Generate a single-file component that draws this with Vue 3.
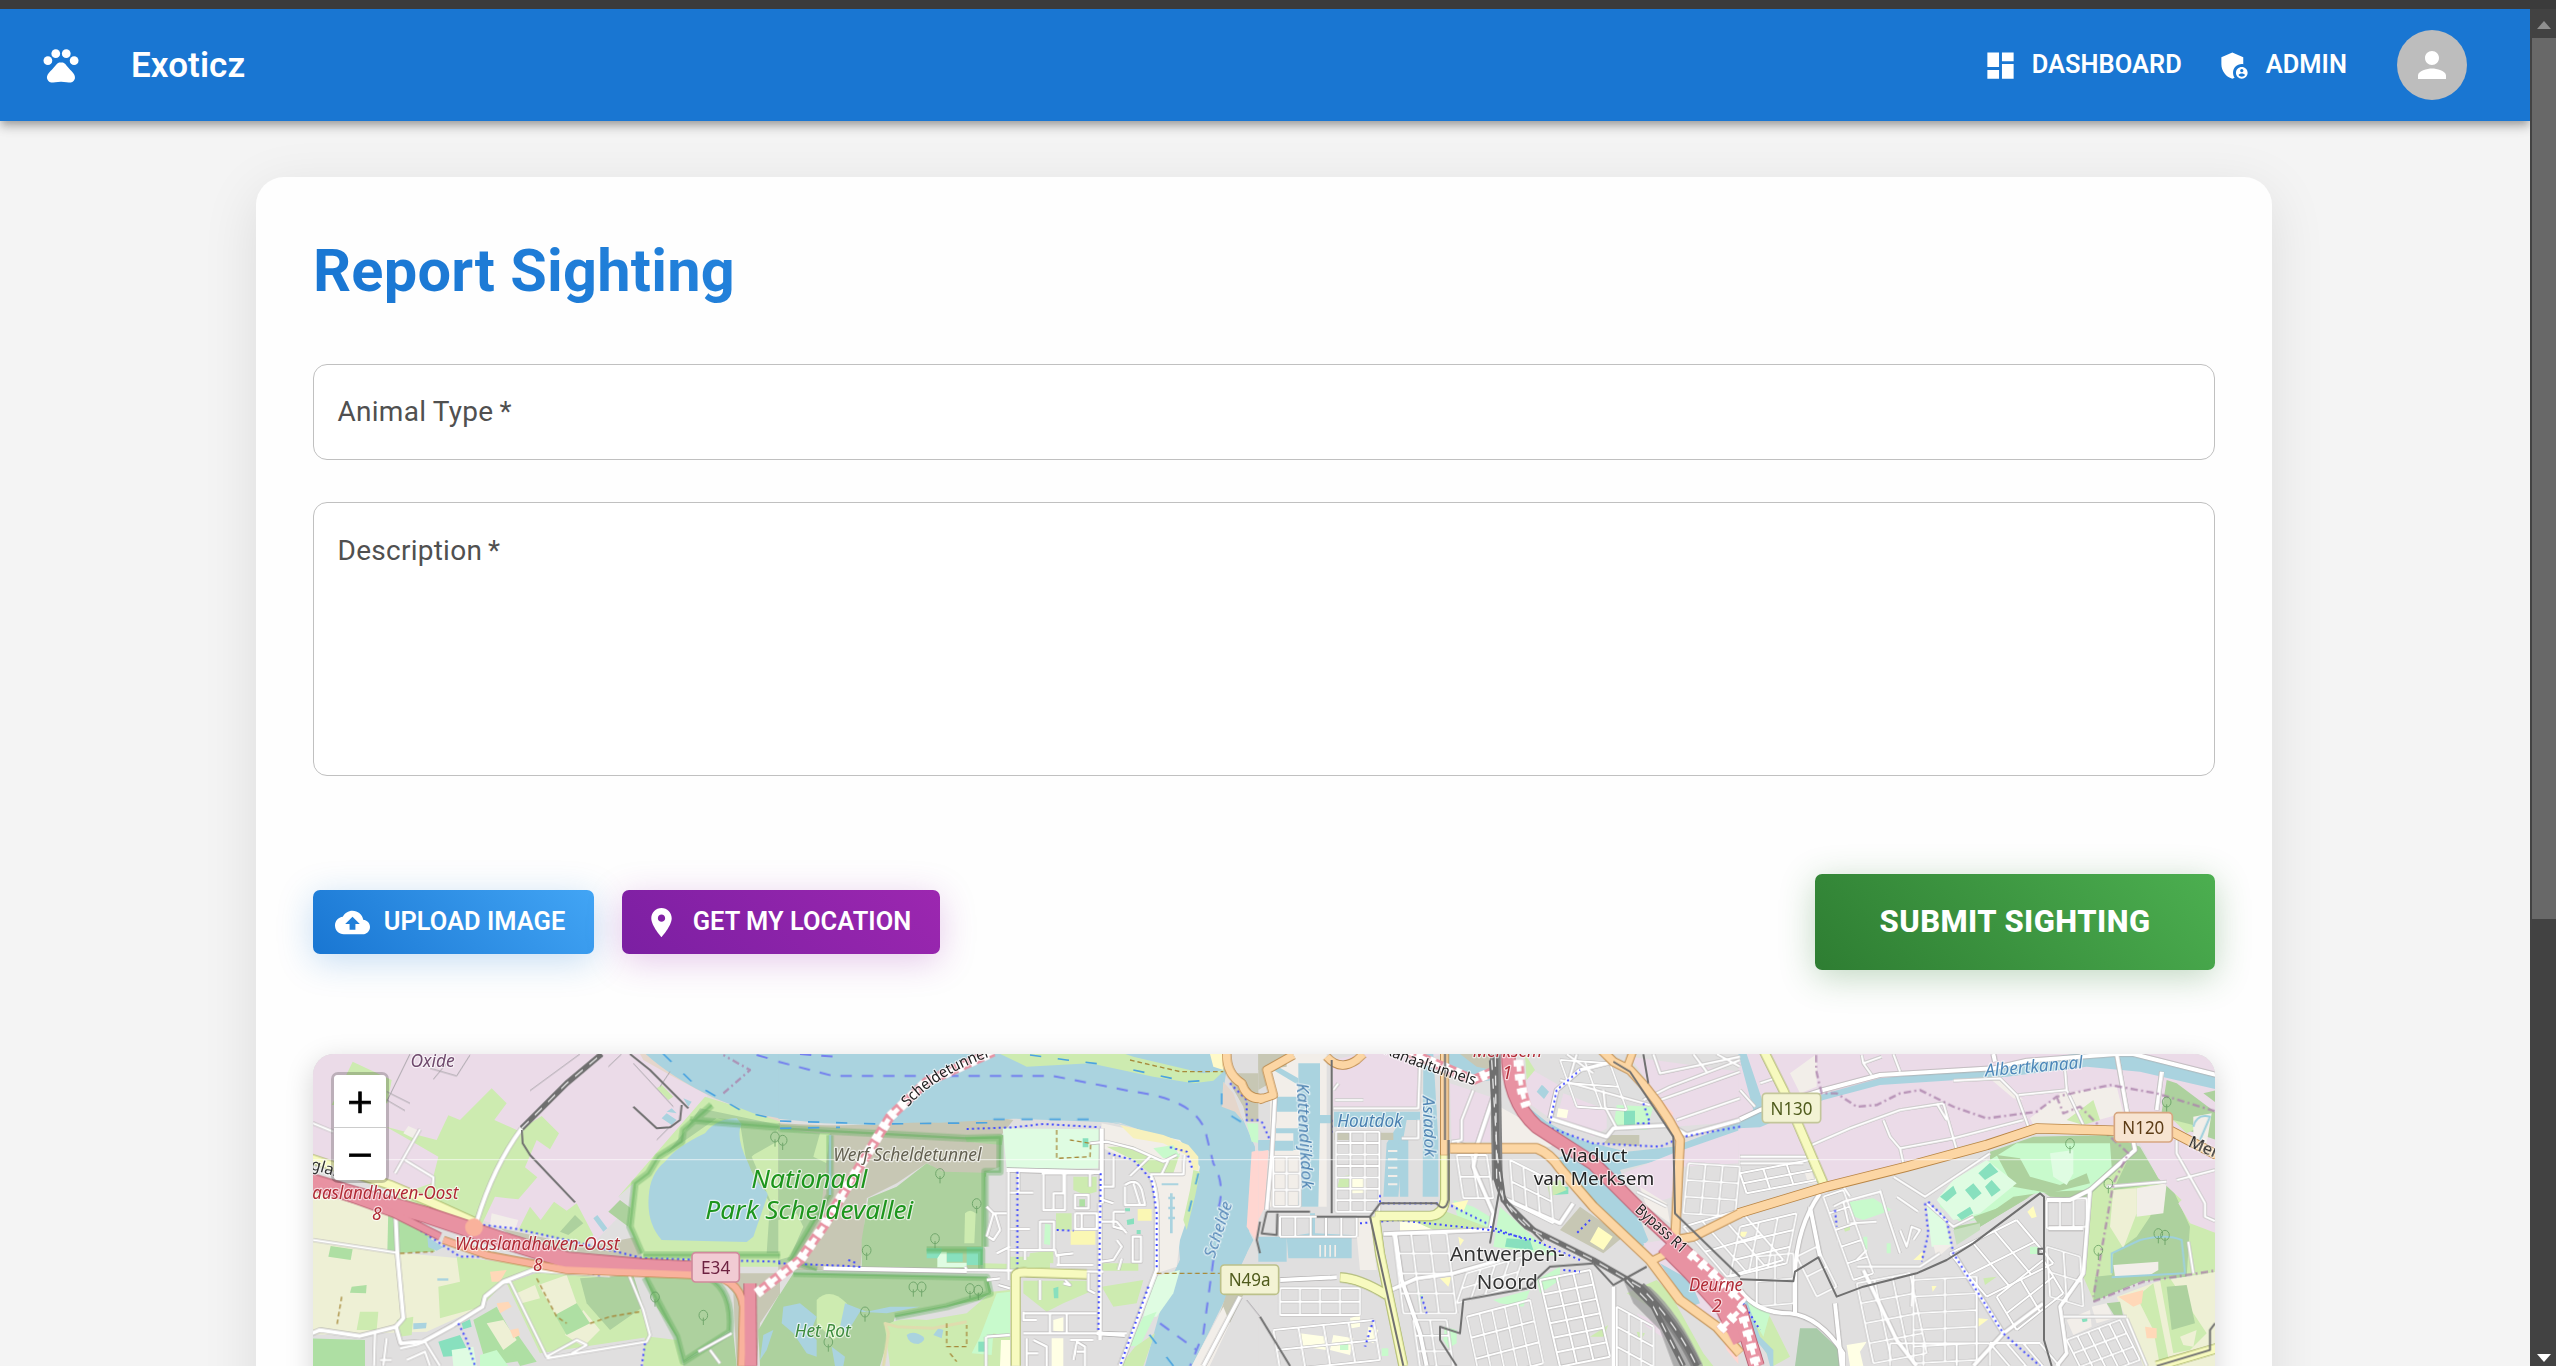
<script setup>
const icons = {
  dashboard: 'M3 13h8V3H3v10zm0 8h8v-6H3v6zm10 0h8V11h-8v10zm0-18v6h8V3h-8z',
  person: 'M12 12c2.21 0 4-1.79 4-4s-1.79-4-4-4-4 1.79-4 4 1.79 4 4 4zm0 2c-2.67 0-8 1.34-8 4v2h16v-2c0-2.66-5.33-4-8-4z',
  upload: 'M19.35 10.04C18.67 6.59 15.64 4 12 4 9.11 4 6.6 5.64 5.35 8.04 2.34 8.36 0 10.91 0 14c0 3.31 2.69 6 6 6h13c2.76 0 5-2.24 5-5 0-2.64-2.05-4.78-4.65-4.96zM14 13v4h-4v-4H7l5-5 5 5h-3z',
  pin: 'M12 2C8.13 2 5 5.13 5 9c0 5.25 7 13 7 13s7-7.75 7-13c0-3.87-3.13-7-7-7zm0 9.5c-1.38 0-2.5-1.12-2.5-2.5s1.12-2.5 2.5-2.5 2.5 1.12 2.5 2.5-1.12 2.5-2.5 2.5z'
}

// Map palette
const IND = '#ebdbe8', GRASS = '#cdebb0', WOOD = '#add19e', WATER = '#aad3df', PARK = '#c8facc'
const FARM = '#eef0d5', BROWN = '#c7c7b4', PITCH = '#88e0be', REC = '#dffce2', SCHOOL = '#ffffe5'
const RES = '#e0dfdf', SAND = '#f2eee9', ALLOT = '#aedfa3', PEACH = '#ffd8b8', BEACH = '#e5d6cb', RETAIL = '#ffd6d1'

// Street mesh over a parallelogram: origin, two edge vectors, divisions along each
function mesh(x, y, ux, uy, vx, vy, n, m) {
  let d = ''
  for (let i = 0; i <= n; i++) {
    const t = i / n
    d += `M${x + ux * t} ${y + uy * t}l${vx} ${vy}`
  }
  for (let j = 0; j <= m; j++) {
    const t = j / m
    d += `M${x + vx * t} ${y + vy * t}l${ux} ${uy}`
  }
  return d
}

// Each tile is 1440 units wide; coordinates below are local to the tile
const tiles = [
  {
    x: 0,
    areas: [
      [IND, 'M0 30H1260L1215 190L955 470L985 500L880 610L560 545L0 350Z'],
      [GRASS, 'M158 65L275 120L262 190L95 195Z'],
      [GRASS, 'M258 260L410 300L445 226L480 240L575 145L620 190L583 240L655 272L725 228L777 280L750 328L710 300L675 382L712 412L655 478L585 470L540 565L250 480L395 430L415 350L345 310Z'],
      [GRASS, 'M655 570L690 500L722 540L762 485L800 512L830 490L880 585L860 615Z'],
      [IND, 'M590 473L672 500L650 562L575 545Z'], [SAND, 'M575 520L655 540L645 570L570 555Z'],
      [SAND, 'M325 258L352 270L340 295L310 280Z'],
      [BROWN, 'M600 565L860 620L1010 590L1030 660L700 630Z'],
      [WOOD, 'M960 480L1000 510L985 560L925 515Z'], [WOOD, 'M780 575L825 525L850 550L805 585Z'],
      [FARM, 'M0 410L270 500L262 635L480 655L560 690L545 800L380 875L0 885Z'],
      [ALLOT, 'M265 505L390 590L405 635L262 640Z'], [ALLOT, 'M92 618L158 628L152 660L85 650Z'],
      [GRASS, 'M470 650L720 680L600 740L545 800L420 835L415 740L480 725Z'],
      [WATER, 'M382 590L430 622L410 632L385 622Z'],
      [ALLOT, 'M155 740L200 735L198 760L150 758Z'], [GRASS, 'M180 815L235 815L230 870L170 870Z'],
      [ALLOT, 'M35 895L195 900V978H35Z'],
      [GRASS, 'M290 840L340 830L335 885L300 890Z'],
      [GRASS, 'M620 730L720 695L990 700L1050 890L720 940Z'],
      [FARM, 'M715 735L800 705L830 790L770 830Z'], [FARM, 'M850 810L900 870L850 920L795 885Z'],
      [FARM, 'M650 760L705 735L720 775L665 790Z'],
      [WOOD, 'M840 715L1000 705L1030 800L930 870L860 790Z'],
      [ALLOT, 'M765 825L830 790L870 850L800 885Z'],
      [ALLOT, 'M520 840L590 800L680 960L560 978Z'], [ALLOT, 'M650 880L710 965L660 978L625 910Z'],
      [FARM, 'M560 850L610 840L650 900L610 930Z'], [PEACH, 'M570 695L620 690L600 725L575 725Z'],
      [PEACH, 'M590 790L625 785L635 800L600 820Z'], [PEACH, 'M630 870L655 865L660 885L640 895Z'],
      [PITCH, 'M415 905L480 885L510 945L430 950Z'], [PITCH, 'M485 850L510 838L515 860L490 868Z'],
      [REC, 'M455 930L520 920L530 978H460Z'], [PARK, 'M540 945L590 930L625 978H540Z'],
      [WATER, 'M340 850L380 848L378 865L340 868Z'], [WATER, 'M412 715H445V722H412Z'],
      [WATER, 'M1085 235l15-15 30 20-15 15zM1150 175l25 10-10 15zM1100 215l15-10 15 15zM880 535l12-10 30 40-12 10z'],
      [GRASS, 'M1070 145L1085 135L1120 170L1105 180Z'],
      [GRASS, 'M1215 170L1440 240V680H1025L1025 640L985 560L1000 430L955 470Z'],
      [WOOD, 'M1200 205L1440 255V640H1400L1410 490L1340 370L1320 250L1250 235L1100 340L1150 280Z'],
      [BEACH, 'M1020 42L1030 60L1110 105L1240 175L1440 245V200L1060 40Z'],
      [WATER, 'M1035 30H1445V236L1360 220L1245 175Q1110 110 1035 40Z'],
      [WATER, 'M1095 365Q1130 320 1215 280Q1250 235 1310 235L1325 252Q1305 290 1345 370Q1365 430 1405 460L1360 590L1340 606L1085 600Q1040 550 1046 470Q1050 400 1095 365Z'],
      [GRASS, 'M1355 350L1440 260V540L1410 480Z'], [WOOD, 'M1330 255L1440 275V300L1350 350Z'],
      [GRASS, 'M1030 978L1035 880L1050 890L1130 900L1150 978Z'],
      [WOOD, 'M1035 710L1220 710Q1300 750 1290 870L1150 965L1130 890L1070 800Z'],
      [WOOD, 'M1150 965L1300 880L1310 978H1150Z'],
      [BROWN, 'M1250 700H1440V760L1380 850L1370 978H1310L1300 760Z'],
      [WOOD, 'M1375 870L1440 760V978H1380Z'], [WATER, 'M1390 885L1420 870L1400 930L1380 960Z']
    ],
    glow: ['M1235 195L1150 270L1145 305L1075 350L1045 400L1005 430L990 560L1025 640', 'M1170 240L1440 262', 'M1030 645H1440', 'M1035 712L1130 890L1150 965L1290 875Q1300 750 1225 712'],
    s: ['M39 250L100 275M39 600L290 638M600 730L630 725L740 950L830 900L860 915L815 940M740 955L1040 905L1050 885L1030 810L985 700L930 705M250 978L260 895M240 960H275M300 925L350 915L375 905L420 978M225 880L222 978M320 960L375 935L390 978M1195 935L1295 880M1230 930L1260 970M285 400L360 268M315 360L400 412L398 440'],
    m: ['M530 545Q580 380 665 265', 'M283 440L292 640L310 835L288 860L302 910L370 905L460 855L548 800L555 770L610 725L700 690L930 705', 'M0 895L60 870L180 888L290 860'],
    y: ['M0 345L270 435L400 490L520 545'],
    rd: [['M0 415L150 460L380 525L590 595L800 660L1025 680L1180 688H1260', 46, '#e892a2'], ['M0 420L280 520L420 590', 20, '#e892a2'], ['M430 600L560 645L800 690L1180 705Q1320 700 1330 800L1325 978', 20, '#f9b29c'], ['M1350 730L1352 978', 34, '#e892a2']],
    rail: ['M665 265L730 200L800 130L905 42'],
    rail2: ['M665 270L668 310L690 345L825 487', 'M990 42L1050 90L1165 205', 'M1000 200L1070 265L1110 262L1140 240L1145 195'],
    thin: ['M260 185L330 42M260 155L330 190M260 180L315 212M690 152L840 42M400 118L440 70M390 85L470 108L510 45M925 80L965 42M1000 70L1120 200M1070 300L1110 260M1080 140L1110 95'],
    blue: ['M160 480L290 525L390 590L480 650L610 650L800 692L900 705', 'M550 555L640 565L800 600L950 635L1030 655L1440 665', 'M475 850L500 900L525 978', 'M1035 910L1025 978'],
    sea: ['M1090 42L1180 130L1250 170L1330 215L1440 240'],
    ferry: ['M1370 45L1430 62'],
    admin: ['M1270 160L1350 90L1270 45'],
    brown: ['M125 770L110 860', 'M300 640L400 635', 'M710 715L770 830L800 850', 'M870 850L930 830L1020 815']
  },
  {
    x: 1440,
    areas: [
      [BROWN, 'M-5 260L220 255L640 230L700 240L660 290L640 380L480 410L440 360L350 420L260 470L240 690H-5Z'],
      [WATER, 'M-5 30H1330L1300 120L1240 128L1100 95L880 45L960 200L1200 330L1260 400L1240 500L1200 600L1200 660L1150 820L1100 978H1235L1290 870L1340 760L1400 640L1420 600L1400 560L1425 420V320L1390 240L1330 150L1350 30H1440V42H-5V236L130 250L280 255L640 232H720L930 236L1060 260Z'],
      [WATER, 'M-5 30H1340L1325 110L1335 220L1410 310L1425 420L1400 640L1345 760L1235 978H1095L1160 740L1200 660L1195 590L1245 440L1255 400L1220 320L1020 248L700 236L480 248L180 245L-5 232Z'],
      [GRASS, 'M640 32L740 80L930 70L1120 110L1240 130L1300 122L1335 90L1270 100L1060 50L1000 30Z'],
      [BROWN, 'M-5 250L180 258L160 290L20 300Z'],
      [WOOD, 'M-5 265L150 285L150 470L30 665L-5 675Z'],
      [GRASS, 'M-5 540L50 520L70 560L30 650L-5 660Z'], [GRASS, 'M120 280H150L140 370L100 350Z'],
      [BROWN, 'M150 280L550 290L665 300L660 380L610 400L500 400L440 370L350 430L260 475L240 690L20 690L120 530Z'],
      [WOOD, 'M490 395L680 400L615 410L610 620L600 690L245 685V600L265 475L350 440L440 370Z'],
      [WOOD, 'M555 290L670 285L665 315L560 305Z'], [GRASS, 'M555 520Q570 505 587 520L583 610H553Z'],
      [PITCH, 'M440 625H485V655H440ZM560 622H608V675H560ZM500 638H548V665H500Z'], [REC, 'M485 635H500V668H560V682H472V655Z'],
      [WOOD, 'M40 700L620 712L635 755L600 780L345 830L300 978H-5V770Z'],
      [GRASS, 'M110 780Q150 740 200 790L210 860L160 900L110 850Z'],
      [WATER, 'M10 800L60 790L110 830L90 880L110 900L110 950L80 940L40 880L5 850Z'],
      [WATER, 'M195 790L260 815L330 800L420 800L320 820L240 815L200 880L180 860Z'],
      [GRASS, 'M315 860Q340 830 440 840L560 820L635 755L690 750V978H330Z'],
      [WATER, 'M380 885Q400 870 430 890Q440 900 415 912Q385 912 380 885ZM460 885L475 865L490 870L485 895Z'],
      [WATER, 'M155 920L195 950L190 978H165Z'],
      [PARK, 'M650 760L690 755V890L640 880L635 945L575 940L600 890Z'], [PITCH, 'M595 905H615V935H595Z'],
      [REC, 'M668 265L960 268L955 385L680 388Z'], [PITCH, 'M908 295H925V322H908Z'],
      [SAND, 'M965 250L1200 300L1260 380L1240 480L1200 600L1190 680L1130 700L1110 390L960 320Z'],
      ['#f7f1bd', 'M1020 255L1150 285L1225 315L1255 350V390H1240L1230 350L1150 310L1060 295Z'],
      [GRASS, 'M980 320L1060 320L1150 365L1200 340L1180 400L1110 400L1060 360Z'],
      [PARK, 'M1120 325L1180 315L1200 350L1150 355Z'],
      [GRASS, 'M1240 390L1260 395L1245 470L1220 570L1210 540L1230 450Z'],
      [RES, 'M618 400L680 390L955 390L965 345H1000L1060 360L1120 420L1130 690L970 690L720 700L690 740L620 720V600Z'],
      [RES, 'M725 720L940 740L1110 700L1030 880L1010 978H720Z'],
      [GRASS, 'M880 410H950V455L915 465L880 450ZM828 520H875V570H828ZM690 650H810V690H690ZM610 670L700 672V690H610ZM965 670H1075V692H965Z'],
      [GRASS, 'M730 722L920 722L930 755L850 790L800 815L730 760ZM965 740L1090 720L1070 790L1000 800ZM750 640L820 630V670L745 665Z'],
      [ALLOT, 'M898 478H915V500H898Z'], [PARK, 'M795 550L812 555L810 615L792 612Z'],
      ['#faf7b4', 'M872 573H946V614H872ZM1073 507H1115V542H1073Z'], [SCHOOL, 'M820 840L850 832V875L820 872ZM815 895H850V978H815ZM663 900H690V978H660Z'],
      [PITCH, 'M1040 540L1062 535V552L1042 555ZM1070 570H1082V582H1070ZM1035 505H1050V514H1035ZM820 745L835 740V775H822Z'],
      [REC, 'M1120 710L1200 690L1180 760L1130 830H1090Z'], [PARK, 'M1090 830L1130 815L1080 918H1045Z'],
      [GRASS, 'M1065 920L1125 880L1090 978H1020Z'], [SAND, 'M1150 415H1200V560L1175 590L1145 560Z'],
      [WATER, 'M1170 460H1178V580H1170ZM1165 470h20v8h-20zM1165 500h20v8h-20zM1165 530h20v8h-20zM1145 430H1195V436H1145Z'],
      [BROWN, 'M1340 760L1390 765L1350 850L1320 820Z'], [SAND, 'M1330 800L1350 850L1290 978H1235Z'],
      [BROWN, 'M1370 100L1440 100V245H1400L1390 200L1350 130Z'],
      ['#fff9c8', 'M1290 42H1340L1330 90L1300 80Z'], [BEACH, 'M1330 125L1360 160L1390 245L1365 215L1325 200Z'],
      [PARK, 'M1400 250H1440V310L1415 305Z'], [RETAIL, 'M1415 335L1440 330V620L1400 560Z'],
      [RES, 'M1390 765L1440 760V978H1290Z']
    ],
    glow: ['M0 265L560 295L660 292V395H615V620', 'M110 690L30 660', 'M40 700L620 712L630 760L500 800L345 830', 'M150 285V465L30 665', 'M440 630H605V690'],
    s: ['M685 395V720M715 455V395M790 395V510H855V395M820 458V510M785 400H940M690 458H760M690 567H750M850 395V460H820M885 465H925V505H885ZM885 520V567H950V520H885M930 395V440M905 520V567M780 630V545H822V630M690 630H825L830 650M735 630V660M645 520L660 570L640 600L625 590M620 500L640 520H680M640 520L620 590M650 640L690 620M835 675V645L880 640M830 675H940M560 690L970 695M560 690L555 680', 'M970 440H1000V350M930 310L980 305L1060 325L1150 365L1190 345M1050 408L1110 350M1110 403H1210L1213 345M1145 402L1165 360M1035 435Q1070 410 1085 450L1095 495H1035V440M1060 430L1080 495M1000 515L1035 515M965 545H1010L1040 580M1000 515V560L1035 570M1058 590H1083V665H1058ZM965 665L1000 660L1025 620L1010 600M970 480L1000 490M1015 690L1025 655', 'M730 820H950M730 815V840H770M810 820V880H860V820M730 880H950M740 895V978M760 900L800 920V978M740 940H775M880 960L890 905L915 920V978M890 935H915M870 900H940M925 700V750L945 760M620 720L660 715M620 890L690 885M618 890V978M655 735L690 745M855 720L870 735L850 730M780 720V780M950 880H1040'],
    m: ['M965 265V490', 'M960 490V900', 'M950 880L1035 885', 'M1110 405Q1135 450 1130 560V690L1020 978', 'M680 390L960 397', 'M130 685L560 693', 'M1380 770L1270 978'],
    y: ['M707 978V705Q710 695 740 697L920 703'],
    rd: [['M1340 30Q1335 100 1385 130Q1400 180 1450 175', 24, '#fcd6a4']],
    tunnel: ['M-70 760L60 660L130 560L220 410L330 230L440 125L640 35'],
    rail2: ['M1440 545L1430 600L1440 640'],
    thin: ['M1400 780L1440 830'],
    blue: ['M560 267L700 262L790 252L960 262', 'M-5 670L210 678L250 682M205 660L230 670', 'M712 395V700', 'M962 400L955 870', 'M985 340L1060 360L1115 420L1130 520V690', 'M1105 740L1020 978', 'M830 570L880 572', 'M1170 322L1220 335L1238 390', 'M1350 130L1400 180V240H1440'],
    ferry: ['M-5 65L160 108H820L1060 155Q1260 180 1280 290L1300 370Q1340 440 1310 520M1300 660L1270 880L1230 978', 'M1140 850L1250 930', 'M60 42L160 50'],
    sea: ['M0 243L300 252L640 248', 'M0 265L180 262', 'M640 238H930', 'M750 45L860 60L960 72', 'M1060 90L1220 125L1300 120', 'M1325 160V210L1390 250', 'M1255 400L1215 560', 'M1180 978L1090 860'],
    brown: ['M830 270V355L930 350L932 310L870 300', 'M500 850V920H560V855M510 940L530 965', 'M1050 60L1200 95L1330 95', 'M1130 700H1320']
  },
  {
    x: 2880,
    areas: [
      [RES, 'M-5 30H1450V978H-5Z'],
      [SAND, 'M30 42H200V500H30Z'], [BROWN, 'M-5 42H60L20 90L30 130L-5 150Z'], [BROWN, 'M-5 42H80V80L-5 90Z'],
      [WATER, 'M115 70H180V225H215V250H180L175 500H115L120 330H45V300H-5V330H100V280H48V265H115ZM50 170H115V215H50Z'],
      [WATER, 'M45 75L115 115V135L40 90Z'],
      [WATER, 'M-5 302H100V332H-5Z'],
      [RETAIL, 'M-5 335L25 330L15 500L-5 540Z'],
      [IND, 'M218 60L300 42H550L480 60V210L220 205Z'],
      [WATER, 'M222 215H480V240H440L430 295L415 470H370L380 310L410 260H222ZM490 42H520L535 300V470H488Z'],
      [WATER, 'M415 295H445V470H420Z'],
      [SAND, 'M384 330h28v6h-28zM384 355h28v6h-28zM384 380h28v6h-28zM384 405h28v6h-28zM384 430h28v6h-28z'],
      [BROWN, 'M222 278H275V300H222ZM355 278H400V300H355Z'],
      [SCHOOL, 'M275 415L320 412V458L275 460ZM420 545H540V572H420Z'],
      [GRASS, 'M240 410L270 405V440L230 450Z'],
      [WATER, 'M-5 590H80V665H-5ZM80 590L150 580V520H165V580L275 585V655H85Z'],
      [SAND, 'M178 615h5v35h-5zM193 615h5v35h-5zM208 615h5v35h-5zM223 615h5v35h-5z'],
      [SAND, 'M285 530H330L350 690H300Z'],
      [IND, 'M570 130L690 170V305H575Z'], [WATER, 'M560 42H610L680 75L700 120L660 125L560 70Z'],
      [BROWN, 'M600 42H700V90L650 80Z'],
      [SAND, 'M700 190L900 300L870 320H730Z'],
      [WATER, 'M790 190L860 245L960 300L1100 335L1240 320L1440 245V285L1240 350L1080 390L1165 600L1130 640L990 500L880 360L950 330L830 270L750 130Z'],
      ['#dfdfdf', 'M900 42H1100L1130 90L1200 180L1235 260L1060 265L890 235L920 120Z'],
      [IND, 'M800 80L905 140L870 235L800 185Z'], [WATER, 'M830 155l15-20 22 20-15 22zM840 142l8-6 16 16-8 6z'],
      [IND, 'M910 160L1040 210V265L1000 290L890 235Z'], [IND, 'M1110 50L1440 95V245L1240 260L1200 180Z'],
      [GRASS, 'M795 42L825 90L800 120Z'], [PARK, 'M1070 195L1180 200L1160 270L1060 265Z'], [PITCH, 'M1092 212H1125V255H1092Z'],
      [BROWN, 'M1055 285H1138V318L1030 310Z'], [SCHOOL, 'M895 205L925 210L920 235L890 230Z'],
      [RETAIL, 'M1190 165L1240 220L1230 245L1180 190Z'],
      [IND, 'M1090 400L1240 340L1440 270V370L1270 380L1240 470L1180 490Z'],
      [SAND, 'M1140 440L1220 490L1230 550L1160 500Z'],
      [PARK, 'M580 480L640 500L690 530V570L600 560ZM720 500L830 600L900 650L700 620Z'], [PITCH, 'M740 595L810 600L820 630L735 620Z'],
      [GRASS, 'M410 520L560 515L680 560L660 575L520 570Z'], ['#fffcc0', 'M575 490L625 480L610 515Z'],
      [BROWN, 'M960 500L1090 590L1030 640L900 570Z'], ['#fffcc0', 'M1015 560L1058 590L1030 630L990 605Z'],
      [PITCH, 'M880 440H925V462L880 465Z'], [GRASS, 'M860 430L900 420L920 450L870 470Z'],
      [PARK, 'M700 780L810 750L790 800L720 790ZM830 720L900 680V720L840 760Z'],
      [SCHOOL, 'M120 880L200 890V930L130 920ZM220 885L280 895L270 945L210 930ZM270 835L300 825V860L275 865ZM325 860L355 870L340 910L320 900Z'],
      [PARK, 'M555 860L590 870V910L565 925L550 900ZM240 905L265 905V930H240ZM365 925H385V948H365ZM470 750L490 760L480 820Z'],
      ['#fffcc0', 'M540 715L575 710L565 740ZM595 590L612 600L600 618Z'],
      [GRASS, 'M1100 760L1190 720L1230 760L1330 940L1360 978H1300L1200 820Z'],
      [GRASS, 'M990 890L1045 855L1030 890ZM1130 875L1155 880L1140 905Z'],
      [IND, 'M1150 610L1210 600L1290 700L1380 820L1360 860L1200 690Z'], [WATER, 'M1200 670L1290 720L1320 790L1290 800Z'],
      [RETAIL, 'M1380 870L1440 930V978L1400 930Z'],
      [PARK, 'M1270 600L1440 780V840L1300 660Z'], [IND, 'M1130 820L1200 850L1220 900L1160 860Z']
    ],
    grids: [
      mesh(228, 275, 130, 0, 0, 240, 3, 7), mesh(40, 350, 80, 0, 0, 150, 2, 3),
      mesh(60, 745, 240, 0, 0, 80, 4, 2), mesh(400, 580, 160, 0, 30, 240, 3, 4), mesh(60, 530, 230, 0, 0, 60, 5, 1),
      mesh(460, 840, 100, 0, 20, 140, 2, 3), mesh(620, 700, 170, -50, -30, 90, 4, 2), mesh(620, 830, 190, -50, 40, 190, 5, 3),
      mesh(840, 720, 150, -30, 60, 260, 3, 6), mesh(1070, 800, 110, 60, 0, 180, 3, 3), mesh(750, 360, 120, 60, 10, 130, 3, 2),
      mesh(590, 345, 90, 0, 20, 130, 2, 2), mesh(1285, 370, 155, 10, -15, 150, 3, 3), mesh(900, 60, 150, 10, 50, 140, 2, 2), mesh(40, 870, 300, -30, 20, 120, 4, 2), mesh(1270, 560, 170, -50, 130, 150, 3, 2)
    ],
    s: ['M220 205H475L480 60M225 180H310M220 150L235 130M425 295H475V240M300 42V60M1030 150L1035 200L1070 265M900 120L1170 195M1200 180L1440 95M1150 180L1230 140L1440 60M1180 42L1200 100L1440 50M1250 240L1440 175M1130 455L1220 500M575 305L605 300V240L640 150', 'M920 42L1000 100M950 42L930 110M1300 42L1340 95M1370 42L1440 80'],
    m: ['M45 170L40 260L35 350L20 510', 'M590 310L650 330L640 380L700 520L690 570L370 582', 'M60 720L230 712', 'M370 760L470 715L580 700L720 660', 'M405 580L425 720L480 880L500 978', 'M1060 740V978', 'M870 235L1040 290L1060 265L1230 255L1280 285L1440 240', 'M870 235L890 150L960 90L1060 65', 'M720 470L900 550L940 490', 'M700 170L650 320'],
    y: ['M555 340V480Q550 525 510 528H345', 'M345 530L360 640L430 978', 'M240 712Q300 715 380 765'],
    rd: [['M-5 180L40 165L20 90L100 45M200 50Q240 95 290 60L310 42', 22, '#fcd6a4'], ['M553 30V345', 22, '#fcd6a4'], ['M570 325H830Q870 340 900 385L1000 500L1170 660L1260 780L1370 860L1440 940', 26, '#fcd6a4'], ['M1025 30L1060 65L1110 90Q1200 180 1260 300L1245 600L1300 590L1440 520', 24, '#fcd6a4'], ['M1120 30L1100 85M1170 665L1220 640', 20, '#fcd6a4'], ['M745 30Q740 180 830 260L1000 370L1130 500L1290 650', 38, '#e892a2'], ['M1220 610L1300 690L1400 800L1450 900', 66, '#e892a2']],
    tunnel: ['M430 30L560 85L640 120L700 95', 'M775 60Q780 150 800 200', 'M1290 640L1390 730L1450 790', 'M1380 870L1450 800'],
    rail: ['M706 50L710 420Q730 500 800 560L1000 660L1140 740Q1250 850 1310 978', 'M695 60L712 350L730 480L850 600', 'M1100 720L1180 800L1270 978'],
    corridor: ['M706 42L712 420', 'M1140 740Q1250 850 1310 978'],
    railarea: 'M1090 720L1170 740Q1260 820 1330 978H1240L1200 870L1120 790Z',
    rail2: ['M555 42V300M565 300V480Q555 520 530 490H360L330 530H170M215 60V520', 'M20 515H150M20 515L5 580L50 585L52 520', 'M330 530L430 978', 'M1000 670L870 680L800 745L610 780L600 880L540 860V900L590 978', 'M720 440L690 610', 'M1000 670L1060 735L1160 680', 'M1060 65L1110 95L1240 290L1245 520L1440 710', 'M0 830L90 978', 'M1150 42L1165 130'],
    blue: ['M870 250L890 150L960 90', 'M860 260L1000 310L1200 320L1270 290L1440 260', 'M300 550L410 540L690 570L820 600L960 660', 'M690 560L800 600', 'M360 465V490L560 490L680 550', 'M340 840L315 920', 'M485 770L500 820', 'M990 540L950 580', 'M1150 190L1170 250L1130 250', 'M5 245L30 300', 'M215 240V280', 'M910 690L960 695']
  },
  {
    x: 4320,
    areas: [
      [RES, 'M-5 330H1430V978H-5Z'],
      [IND, 'M-5 30H1430V580L1350 560L1310 490L1200 310L870 260L270 430L200 350L-5 360Z'],
      [WATER, 'M-5 42H20L70 190L240 165L420 115L730 85L1000 42H1160L1430 110V148L1200 95L1040 80L800 110L420 135L250 180L60 262L-5 265V240L40 210Z'],
      [SAND, 'M150 100L230 42V140L180 160ZM755 120H780L850 180L820 175Z'], [SAND, 'M870 235L960 160L1130 140L1150 220L1000 260L880 255Z'],
      [GRASS, 'M980 240L1060 180L1080 240L1030 255Z'],
      [WOOD, 'M1280 120L1310 130L1430 220V300L1340 270L1265 215ZM1390 160L1430 150V190Z'],
      [GRASS, 'M1300 240L1380 260L1340 280Z'], [SAND, 'M1360 230L1415 220L1400 310L1360 290Z'],
      [RES, 'M280 430L740 325L700 380L560 480L290 480Z'],
      [WOOD, 'M750 335L880 290L1110 285L1200 320L1110 440L1030 475L930 470L900 450L720 560L650 600L640 560L750 540Z'],
      [PARK, 'M600 470L750 360L830 310L1110 310L1115 380L1040 450L930 455L820 470L720 540L660 545L600 500Z'],
      [WOOD, 'M770 345L840 355L870 410L960 435L1040 400L1050 430L930 460L820 440ZM700 530L870 470L720 560Z'],
      [REC, 'M640 420L740 360L830 430L720 520L640 540L590 480Z'], [REC, 'M930 340L1000 330V400L980 435L940 410Z'],
      [PITCH, 'M715 400L750 368L775 395L735 420ZM735 440L755 420L782 450L755 470ZM675 450L700 430L725 460L700 480ZM600 470L640 437L650 460L620 485ZM650 525L690 500L700 520L665 540Z'],
      [REC, 'M560 495L610 520L635 620H575Z'], ['#c8dfc0', 'M640 570L720 550V570L650 615Z'], [SAND, 'M580 615H635L590 655Z'],
      [PARK, 'M330 485L400 475L455 510L370 540L330 525ZM370 590H382V638H370ZM440 610H452V640H440Z'],
      [GRASS, 'M310 560L330 555V570L315 575ZM730 715L770 710L735 735Z'], [PARK, 'M870 620H895V642H870Z'],
      ['#fffcc0', 'M862 515L880 498L890 530L875 535ZM520 660L550 632L545 660ZM715 835L745 838L715 860ZM-5 575H22L15 590H0ZM575 738H590L578 755Z'],
      [SAND, 'M195 400L230 395V430L205 432Z'],
      [GRASS, 'M1055 460L1200 330L1260 420L1430 560V700L1210 720L1060 780L1030 710Z'],
      [WOOD, 'M1170 345L1200 320L1255 415L1290 430L1350 560L1340 710L1200 725L1060 785L1065 710L1115 705L1120 640L1190 590L1230 530L1270 430L1120 450Z'],
      [SAND, 'M1190 445L1280 430L1270 520L1190 530Z'], [FARM, 'M1120 450L1190 445V520L1150 625L1110 560Z'],
      [SAND, 'M1120 675L1255 665V690L1230 705L1125 710Z'], [IND, 'M1200 310H1430V580L1350 550L1315 490L1325 480L1255 415Z'],
      [GRASS, 'M1350 560L1430 580V695L1345 705Z'],
      [FARM, 'M1130 770L1250 725L1430 695V978H1210L1160 840Z'], [GRASS, 'M1260 720L1290 715L1400 880L1350 930L1300 940Z'],
      [WOOD, 'M1280 740L1340 735L1365 850L1295 870Z'], [GRASS, 'M1190 770L1240 870L1260 978H1290L1240 730Z'], [PEACH, 'M1135 770L1210 750L1205 790L1180 800ZM1215 860L1250 865V895L1220 895Z'],
      [FARM, 'M1320 890L1370 870L1360 920L1330 915Z'],
      [SAND, 'M980 840L1050 810L1055 860L1000 885ZM1055 800L1100 790L1120 835L1070 850Z'], [PITCH, 'M1025 837L1042 834V844L1028 847Z'], [WOOD, 'M1100 790L1140 785L1150 830L1125 830Z'],
      [GRASS, 'M0 770L90 830L150 950L100 978L40 870Z'], [PARK, 'M0 770L90 820L70 890Z'], ['#a9cba9', 'M180 865H230L310 940V978H165Z'], [WATER, 'M0 770L20 780L60 890L100 930V978H90L80 940L40 890Z'],
      [SCHOOL, 'M320 915L380 905L360 935L370 978H330Z']
    ],
    grids: [
      mesh(0, 400, 210, -40, 20, 60, 3, 2), mesh(0, 560, 170, -40, -30, 150, 3, 3), mesh(50, 650, 110, -10, 0, 150, 2, 2), mesh(250, 470, 60, -20, 90, 250, 1, 5),
      mesh(350, 730, 160, -30, 50, 240, 3, 4), mesh(520, 720, 190, -10, 0, 250, 2, 5), mesh(630, 640, 200, -100, 110, 130, 3, 2),
      mesh(770, 770, 140, -110, 60, 100, 2, 2), mesh(450, 910, 300, 0, 0, 68, 3, 0.5), mesh(920, 480, 120, -5, 0, 85, 3, 1),
      mesh(920, 620, 100, 30, 10, 150, 2, 2), mesh(980, 900, 160, -60, 60, 120, 5, 3), mesh(750, 910, 150, 0, 60, 70, 3, 1),
      mesh(170, 650, 60, -30, 60, 120, 1, 2)
    ],
    s: ['M215 315L330 265L480 210L610 190L650 330M430 240L450 290L480 325L490 370M480 325L640 295L850 240M365 45L370 70L395 105M370 70L425 50M460 42L480 95M640 122L780 115L830 165L865 260M835 165L980 150L975 90M980 150L1030 255M590 190L620 240M60 130L120 110M0 150L45 200M0 350L200 350M0 370H190M280 500L310 485L420 455M310 485L325 550M420 450L440 520L480 640M330 550L410 545M480 570L500 620L515 560L540 570L520 600M350 660L380 630M460 410L555 470L750 340M310 440L330 470M470 470L535 515M560 490L640 560L700 530', 'M1310 300V340L1395 490V530L1425 543M1310 420L1425 390M1100 440L1280 425M1345 605L1360 700', 'M600 640L540 680L350 680M520 700L515 800M1160 835L1220 978M970 830L1160 830'],
    m: ['M0 238L60 210L250 150L420 105L760 85L860 62L1130 42H1180L1430 105', 'M1130 42L1160 210L1185 330L1050 450L1030 700L960 800L980 940L950 978', 'M240 460Q170 560 165 700V820M210 500L240 650', 'M0 750Q50 820 150 820Q240 830 310 940V978', 'M285 790L305 978', 'M1265 95L1250 210M925 565H1030M920 480H990L1050 450', 'M640 640L790 880L700 978', 'M790 880L910 790', 'M370 690L470 900L530 978', 'M760 42L765 65'],
    y: ['M70 30L130 150L250 430', 'M1430 925L1250 978', 'M1250 978L1430 925'],
    rd: [['M-5 520L260 440L500 380L740 315L890 265L1120 272H1290L1430 345', 26, '#fcd6a4'], ['M-5 800L50 978', 44, '#e892a2']],
    tunnel: ['M10 830L50 978'],
    rail2: ['M0 718L160 724L165 695L235 652L290 770L370 740L530 700L620 660L700 610L900 460L912 470V900L935 978', 'M910 626H895V642H912', 'M1425 850L1410 870V930L1250 978'],
    admin: ['M228 45V90L245 160L290 160L350 200L410 195L480 160L540 150L640 200L740 235L890 215L950 170L1110 135L1250 160L1430 215', 'M950 170L970 220L1020 200L1110 290L1165 340L1120 430L1060 770', 'M1060 785L1210 725L1425 692'],
    blue: ['M555 490L565 580L545 665', 'M565 485L620 540L640 640L790 880L900 978', 'M285 510L290 560', 'M0 775L60 870']
  }
]

const flat = key => tiles.flatMap(t => (t[key] || []).map(v => ({ x: t.x, v })))
const areas = flat('areas')
const glow = flat('glow')
const grids = flat('grids')
const streets = flat('s')
const medium = flat('m')
const yellow = flat('y')
const major = flat('rd')
const tunnels = flat('tunnel')
const rails = flat('rail')
const corridors = flat('corridor')
const rails2 = flat('rail2')
const thin = flat('thin')
const paths = flat('blue')
const ferries = flat('ferry')
const sea = flat('sea')
const brown = flat('brown')
const admin = flat('admin')
const at = x => `translate(${x} 0)`

const trees = [[1425, 290], [1065, 770], [1210, 825], [1448, 300], [1920, 400], [2030, 490], [1905, 595], [1700, 630], [1840, 740], [1865, 740], [2010, 745], [2035, 750], [1695, 815], [1585, 905], [5575, 580], [5595, 585], [5600, 185], [5310, 310], [5425, 430], [5395, 630]]

const labels = [
  { t: 'Oxide', x: 398, y: 81, s: 52, c: '#6f4a6d', i: 1, w: 133 },
  { t: 'glar', x: 76, y: 400, s: 48, c: '#333', r: 16 },
  { t: 'aaslandhaven-Oost', x: 256, y: 478, s: 52, c: '#b02a35', i: 1, w: 438 },
  { t: '8', x: 230, y: 541, s: 52, c: '#b02a35', i: 1 },
  { t: 'Waaslandhaven-Oost', x: 712, y: 629, s: 52, c: '#b02a35', i: 1, w: 494 },
  { t: '8', x: 713, y: 692, s: 52, c: '#b02a35', i: 1 },
  { t: 'Nationaal', x: 1528, y: 445, s: 74, c: '#1d951d', i: 1, w: 348 },
  { t: 'Park Scheldevallei', x: 1528, y: 538, s: 74, c: '#1d951d', i: 1, w: 624 },
  { t: 'Werf Scheldetunnel', x: 1822, y: 363, s: 52, c: '#625f50', i: 1, w: 445 },
  { t: 'Het Rot', x: 1568, y: 892, s: 52, c: '#3d8b3d', i: 1, w: 168 },
  { t: 'Schelde', x: 2760, y: 582, s: 50, c: '#5688b8', i: 1, r: -72, w: 175 },
  { t: 'Kattendijkdok', x: 3011, y: 300, s: 50, c: '#4a80b0', i: 1, r: 87, w: 318 },
  { t: 'Houtdok', x: 3210, y: 260, s: 54, c: '#4a80b0', i: 1, w: 196 },
  { t: 'Asiadok', x: 3382, y: 272, s: 50, c: '#4a80b0', i: 1, r: 88, w: 182 },
  { t: 'Viaduct', x: 3882, y: 367, s: 54, c: '#222', w: 200 },
  { t: 'van Merksem', x: 3882, y: 435, s: 54, c: '#222', w: 362 },
  { t: 'Antwerpen-', x: 3622, y: 664, s: 61, c: '#333', w: 344 },
  { t: 'Noord', x: 3622, y: 747, s: 61, c: '#333', w: 184 },
  { t: 'Merksem', x: 3622, y: 52, s: 52, c: '#b02a35', i: 1, w: 208 },
  { t: '1', x: 3622, y: 116, s: 52, c: '#b02a35', i: 1 },
  { t: 'Deurne', x: 4248, y: 754, s: 52, c: '#b02a35', i: 1, w: 162 },
  { t: '2', x: 4250, y: 815, s: 52, c: '#b02a35', i: 1 },
  { t: 'Albertkanaal', x: 5202, y: 97, s: 52, c: '#4d87b8', i: 1, r: -5, w: 294 },
  { t: 'Merk', x: 5722, y: 344, s: 50, c: '#222', r: 23 }
]
const shields = [
  { t: 'E34', x: 1176, y: 638, w: 142, h: 88, f: '#f1cbd3', k: '#d18a9c', c: '#6d2241', l: 88 },
  { t: 'N49a', x: 2762, y: 675, w: 174, h: 88, f: '#f3f3d4', k: '#bcc18a', c: '#4f5b1c', l: 126 },
  { t: 'N130', x: 4387, y: 160, w: 175, h: 88, f: '#f3f3d4', k: '#c3c69a', c: '#4f5b1c', l: 126 },
  { t: 'N120', x: 5443, y: 218, w: 174, h: 88, f: '#f7e4d1', k: '#d7a680', c: '#5c3c16', l: 126 }
]
</script>

<template>
  <div class="screen">
    <div class="strip"></div>
    <div class="body">
      <div class="page">
        <header class="bar">
          <svg class="paw" viewBox="0 0 24 24" fill="#fff">
            <circle cx="4.5" cy="9.5" r="2.5" /><circle cx="9" cy="5.5" r="2.5" />
            <circle cx="15" cy="5.5" r="2.5" /><circle cx="19.5" cy="9.5" r="2.5" />
            <path d="M17.34 14.86c-.87-1.02-1.6-1.89-2.48-2.91-.46-.54-1.05-1.08-1.75-1.32-.11-.04-.22-.07-.33-.09-.25-.04-.52-.04-.78-.04s-.53 0-.79.05c-.11.02-.22.05-.33.09-.7.24-1.28.78-1.75 1.32-.87 1.02-1.6 1.89-2.48 2.91-1.31 1.31-2.92 2.76-2.62 4.79.29 1.02 1.02 2.03 2.33 2.32.73.15 3.06-.44 5.54-.44h.18c2.48 0 4.81.58 5.54.44 1.31-.29 2.04-1.31 2.33-2.32.31-2.04-1.3-3.49-2.61-4.8z" />
          </svg>
          <span class="brand">Exoticz</span>
          <nav class="nav">
            <a class="link"><svg viewBox="0 0 24 24"><path :d="icons.dashboard" /></svg><span>DASHBOARD</span></a>
            <a class="link admin"><svg viewBox="0 0 24 24">
              <path d="M17 11c.34 0 .67.04 1 .09V6.27L10.5 3 3 6.27v4.91c0 4.54 3.2 8.79 7.5 9.82.55-.13 1.08-.32 1.6-.55-.69-.98-1.1-2.17-1.1-3.45 0-3.31 2.69-6 6-6z" />
              <path d="M17 13c-2.21 0-4 1.79-4 4s1.79 4 4 4 4-1.79 4-4-1.79-4-4-4zm0 1.38c.62 0 1.12.51 1.12 1.12s-.51 1.12-1.12 1.12-1.12-.51-1.12-1.12.5-1.12 1.12-1.12zm0 5.37c-.93 0-1.74-.46-2.24-1.17.05-.72 1.51-1.08 2.24-1.08s2.19.36 2.24 1.08c-.5.71-1.31 1.17-2.24 1.17z" />
            </svg><span>ADMIN</span></a>
            <span class="avatar"><svg viewBox="0 0 24 24"><path :d="icons.person" /></svg></span>
          </nav>
        </header>

        <main class="card">
          <h1 class="title">Report Sighting</h1>
          <div class="field">Animal Type&thinsp;*</div>
          <div class="field area">Description&thinsp;*</div>
          <div class="actions">
            <button class="btn upload"><svg viewBox="0 0 24 24"><path :d="icons.upload" /></svg><span>UPLOAD IMAGE</span></button>
            <button class="btn locate"><svg viewBox="0 0 24 24"><path :d="icons.pin" /></svg><span>GET MY LOCATION</span></button>
            <button class="btn submit"><span>SUBMIT SIGHTING</span></button>
          </div>
          <div class="map">
            <svg class="tiles" viewBox="39 42 5706 936" fill="none" stroke-linejoin="round">
              <rect x="0" y="0" width="5800" height="1000" fill="#e0dfdf" />
              <path v-for="(a, n) in areas" :key="'a' + n" :d="a.v[1]" :fill="a.v[0]" :transform="at(a.x)" />
              <g stroke="#5eae5a" stroke-width="22" opacity=".38"><path v-for="(a, n) in glow" :key="n" :d="a.v" :transform="at(a.x)" /></g>
              <g stroke="#5eae5a" stroke-width="7" opacity=".45"><path v-for="(a, n) in glow" :key="n" :d="a.v" :transform="at(a.x)" /></g>
              <path d="M1590 285V465M5435 700V640L5520 600Q5600 580 5645 600L5655 700L5435 712M5680 260Q5690 220 5730 230L5700 300" stroke="#9ed0dc" stroke-width="6" />
              <path d="M1750 978L1765 880L1755 850L1790 860L1900 865L2000 845" stroke="#dfdcae" stroke-width="9" />
              <g stroke="#b9b8b8" stroke-width="9"><path v-for="(a, n) in grids" :key="n" :d="a.v" :transform="at(a.x)" /></g>
              <g stroke="#bbb9b9" stroke-width="11"><path v-for="(a, n) in streets" :key="n" :d="a.v" :transform="at(a.x)" /></g>
              <g stroke="#aeacac" stroke-width="16"><path v-for="(a, n) in medium" :key="n" :d="a.v" :transform="at(a.x)" /></g>
              <g stroke="#fff" stroke-width="6"><path v-for="(a, n) in grids" :key="n" :d="a.v" :transform="at(a.x)" /></g>
              <g stroke="#fff" stroke-width="7"><path v-for="(a, n) in streets" :key="n" :d="a.v" :transform="at(a.x)" /></g>
              <g stroke="#fff" stroke-width="12"><path v-for="(a, n) in medium" :key="n" :d="a.v" :transform="at(a.x)" /></g>
              <g stroke="#a9a5aa" stroke-width="3"><path v-for="(a, n) in thin" :key="n" :d="a.v" :transform="at(a.x)" /></g>
              <g stroke="#3f48ff" stroke-width="6" stroke-dasharray="6 10"><path v-for="(a, n) in paths" :key="n" :d="a.v" :transform="at(a.x)" /></g>
              <g stroke="#a78a3c" stroke-width="4" stroke-dasharray="14 9"><path v-for="(a, n) in brown" :key="n" :d="a.v" :transform="at(a.x)" /></g>
              <g stroke="#4aa3e0" stroke-width="5" stroke-dasharray="34 50"><path v-for="(a, n) in sea" :key="n" :d="a.v" :transform="at(a.x)" /></g>
              <g stroke="#7480ee" stroke-width="6" stroke-dasharray="34 30"><path v-for="(a, n) in ferries" :key="n" :d="a.v" :transform="at(a.x)" /></g>
              <g stroke="#ac83ac" stroke-width="7" stroke-dasharray="22 10 6 10" opacity=".8"><path v-for="(a, n) in admin" :key="n" :d="a.v" :transform="at(a.x)" /></g>
              <g stroke="#a3b05f" stroke-width="30"><path v-for="(a, n) in yellow" :key="n" :d="a.v" :transform="at(a.x)" /></g>
              <g stroke="#f7fabf" stroke-width="25"><path v-for="(a, n) in yellow" :key="n" :d="a.v" :transform="at(a.x)" /></g>
              <g><path v-for="(a, n) in major" :key="n" :d="a.v[0]" :stroke="a.v[2] === '#e892a2' ? '#b5596c' : '#b98545'" :stroke-width="a.v[1] + 5" :transform="at(a.x)" /></g>
              <g><path v-for="(a, n) in major" :key="n" :d="a.v[0]" :stroke="a.v[2]" :stroke-width="a.v[1]" :transform="at(a.x)" /></g>
              <circle cx="522" cy="562" r="27" fill="#f9b29c" />
              <g stroke="#e892a2" stroke-width="30"><path v-for="(a, n) in tunnels" :key="n" :d="a.v" :transform="at(a.x)" /></g>
              <g stroke="#fff" stroke-width="30" stroke-dasharray="18 24"><path v-for="(a, n) in tunnels" :key="n" :d="a.v" :transform="at(a.x)" /></g>
              <g stroke="#fff" stroke-width="14" stroke-dasharray="34 8"><path v-for="(a, n) in tunnels" :key="n" :d="a.v" :transform="at(a.x)" /></g>
              <path :d="tiles[2].railarea" :transform="at(2880)" fill="#a0a0a0" opacity=".8" />
              <g stroke="#858585" stroke-width="32"><path v-for="(a, n) in corridors" :key="n" :d="a.v" :transform="at(a.x)" /></g>
              <g stroke="#6f6f6f" stroke-width="17"><path v-for="(a, n) in rails" :key="n" :d="a.v" :transform="at(a.x)" /></g>
              <g stroke="#e4e4e4" stroke-width="4" stroke-dasharray="30 26"><path v-for="(a, n) in rails" :key="n" :d="a.v" :transform="at(a.x)" /></g>
              <g stroke="#707070" stroke-width="6"><path v-for="(a, n) in rails2" :key="n" :d="a.v" :transform="at(a.x)" /></g>
              <g stroke="#5f9a5d" stroke-width="3" opacity=".75">
                <path v-for="(t, n) in trees" :key="n" :d="`M${t[0]} ${t[1] + 30}v-22m-13-7a13 15 0 1 1 26 0a13 15 0 1 1 -26 0`" />
              </g>
              <path d="M0 358H5800" stroke="#fff" stroke-width="3" opacity=".85" />
              <g class="labels" text-anchor="middle">
                <text
                  v-for="(l, n) in labels" :key="'l' + n" :x="l.x" :y="l.y" :font-size="l.s" :fill="l.c"
                  :font-style="l.i ? 'italic' : 'normal'" :textLength="l.w" lengthAdjust="spacingAndGlyphs"
                  :transform="l.r ? `rotate(${l.r} ${l.x} ${l.y - 12})` : undefined"
                >{{ l.t }}</text>
                <path id="scheldetunnel" d="M1824 202Q1905 105 2085 45" />
                <text font-size="46" fill="#222" text-anchor="start"><textPath href="#scheldetunnel" textLength="290" lengthAdjust="spacingAndGlyphs">Scheldetunnel</textPath></text>
                <path id="kanaaltunnels" d="M3250 40Q3385 97 3540 140" />
                <text font-size="46" fill="#222" text-anchor="start"><textPath href="#kanaaltunnels" textLength="290" lengthAdjust="spacingAndGlyphs">Kanaaltunnels</textPath></text>
                <path id="bypass" d="M4003 512L4155 650" />
                <text font-size="46" fill="#222" text-anchor="start"><textPath href="#bypass" textLength="192" lengthAdjust="spacingAndGlyphs">Bypass R1</textPath></text>
              </g>
              <g v-for="s in shields" :key="s.t" text-anchor="middle" class="shield">
                <rect :x="s.x" :y="s.y" :width="s.w" :height="s.h" rx="11" :fill="s.f" :stroke="s.k" stroke-width="5" />
                <text :x="s.x + s.w / 2" :y="s.y + 64" font-size="53" :fill="s.c" :textLength="s.l" lengthAdjust="spacingAndGlyphs">{{ s.t }}</text>
              </g>
            </svg>
            <div class="zoom"><span>+</span><span>−</span></div>
          </div>
        </main>
      </div>
      <div class="scroll">
        <svg class="arrow" viewBox="0 0 14 8"><path d="M7 0L14 8H0Z" fill="#8f8f8f" /></svg>
        <div class="thumb"></div>
        <svg class="arrow down" viewBox="0 0 14 8"><path d="M0 0H14L7 8Z" fill="#fff" /></svg>
      </div>
    </div>
  </div>
</template>

<style>
body { overflow: hidden; }
</style>

<style scoped>
.screen { width: 2556px; height: 1366px; overflow: hidden; display: flex; flex-direction: column; font-family: Roboto, sans-serif; background: #f4f4f4; }
.strip { height: 9px; flex: none; background: #3b3b3b; }
.body { display: flex; height: 1357px; }
.page { width: 2530px; height: 1357px; overflow: hidden; background: #f4f4f4; display: flex; flex-direction: column; }
.bar { position: relative; z-index: 2; height: 112px; flex: none; box-sizing: border-box; padding: 0 63px 0 40px; display: flex; align-items: center; background: #1976d2; color: #fff; box-shadow: 0 3.5px 7px -1.75px rgba(0,0,0,.2), 0 7px 8.75px rgba(0,0,0,.14), 0 1.75px 17.5px rgba(0,0,0,.12); }
.paw { width: 42px; height: 42px; margin-right: 49px; }
.brand { font-size: 35px; font-weight: 600; letter-spacing: .003em; }
.nav { margin-left: auto; display: flex; align-items: center; }
.link { display: flex; align-items: center; font-size: 25.4px; font-weight: 600; letter-spacing: .002em; }
.link span, .btn span { display: block; margin-top: -2px; }
.link svg { width: 35px; height: 35px; margin-right: 14px; fill: #fff; }
.link.admin { margin-left: 35px; }
.avatar { width: 70px; height: 70px; margin-left: 50px; border-radius: 50%; background: #bdbdbd; display: flex; align-items: center; justify-content: center; }
.avatar svg { width: 42px; height: 42px; fill: #fff; }
.card { width: 2016px; height: 1500px; flex: none; box-sizing: border-box; margin: 56px 0 0 256px; padding: 57px; border-radius: 28px; background: #fefefe; box-shadow: 0 14px 56px rgba(0,0,0,.1); }
.title { margin: 0 0 56px; height: 74px; line-height: 74px; font-size: 59.5px; font-weight: 700; letter-spacing: .004em; background: linear-gradient(45deg, #1976d2, #42a5f5); -webkit-background-clip: text; background-clip: text; color: transparent; }
.field { height: 96px; box-sizing: border-box; border: 1.75px solid #c0c0c0; border-radius: 14px; padding: 29px 23.5px 0; font-size: 28px; line-height: 36px; letter-spacing: .00938em; color: #505050; background: #fff; }
.area { height: 274px; margin-top: 42px; padding-top: 30px; }
.actions { display: flex; align-items: center; height: 96px; margin-top: 98px; }
.btn { border: 0; height: 64px; border-radius: 7px; padding: 0 7px 0 0; color: #fff; font-family: inherit; font-size: 25.4px; font-weight: 600; letter-spacing: .002em; display: flex; align-items: center; justify-content: center; }
.btn svg { width: 35px; height: 35px; fill: #fff; margin-right: 14px; }
.upload { width: 281px; background: linear-gradient(45deg, #1976d2, #42a5f5); box-shadow: 0 7px 35px rgba(25,118,210,.25); }
.locate { width: 318px; margin-left: 28px; background: linear-gradient(45deg, #7b1fa2, #9c27b0); box-shadow: 0 7px 35px rgba(156,39,176,.25); }
.submit { width: 400px; height: 96px; padding: 0; margin-left: auto; font-size: 31px; font-weight: 800; letter-spacing: .014em; background: linear-gradient(45deg, #2e7d32, #4caf50); box-shadow: 0 7px 35px rgba(46,125,50,.3); }
.map { position: relative; margin-top: 84px; width: 1902px; height: 600px; border-radius: 21px; overflow: hidden; background: #ddd; box-shadow: 0 7px 28px rgba(0,0,0,.17); }
.tiles { display: block; width: 1902px; height: 312px; }
.labels text { font-family: "Noto Sans", sans-serif; paint-order: stroke; stroke: rgba(255,255,255,.65); stroke-width: 7px; }
.shield text { font-family: "Noto Sans", sans-serif; }
.zoom { position: absolute; left: 18px; top: 18px; display: flex; flex-direction: column; border: 3px solid rgba(0,0,0,.2); border-radius: 7px; background-clip: padding-box; }
.zoom span { width: 52px; height: 52px; text-align: center; font: 34px/52px "DejaVu Sans", sans-serif; color: #000; background: #fff; -webkit-text-stroke: .7px #000; }
.zoom span:first-child { border-bottom: 1px solid #ccc; border-radius: 4px 4px 0 0; }
.zoom span:last-child { border-radius: 0 0 4px 4px; }
.scroll { width: 26px; height: 1357px; box-sizing: border-box; background: #424242; display: flex; flex-direction: column; align-items: flex-end; padding: 12px 0 4px; }
.arrow { width: 14px; height: 8px; margin-right: 5px; }
.thumb { width: 24px; height: 881px; margin-top: 9px; background: #686868; }
.down { margin-top: auto; }
</style>
